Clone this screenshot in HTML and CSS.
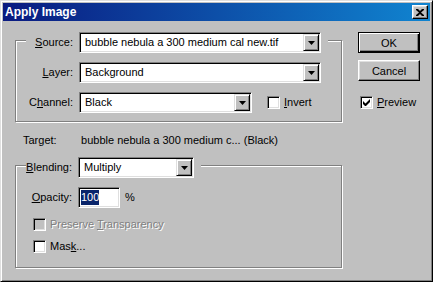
FILE: index.html
```html
<!DOCTYPE html>
<html lang="en">
<head>
  <meta charset="UTF-8" />
  <title>Apply Image</title>
  <link rel="stylesheet" href="styles.css">
</head>
<body>
  <div class="window">
    <div class="titlebar">
      <span class="title">Apply Image</span>
      <button class="close" type="button">
        <svg width="8" height="7" viewBox="0 0 8 7"><path d="M0 0h2l2 2 2-2h2v1L5 3.5 8 6v1H6L4 5 2 7H0V6l3-2.5L0 1z" fill="#000"/></svg>
      </button>
    </div>

    <div class="dialog">
      <div class="main">
        <fieldset class="group">
          <legend class="legend">
            <span class="lbl lbl-legend"><u>S</u>ource:</span>
            <div class="combo combo-wide">
              <span class="value">bubble nebula a 300 medium cal new.tif</span>
              <span class="drop"><svg width="7" height="4" viewBox="0 0 7 4"><path d="M0 0h7L3.5 4z" fill="#000"/></svg></span>
            </div>
          </legend>

          <div class="row">
            <span class="lbl"><u>L</u>ayer:</span>
            <div class="combo combo-wide">
              <span class="value">Background</span>
              <span class="drop"><svg width="7" height="4" viewBox="0 0 7 4"><path d="M0 0h7L3.5 4z" fill="#000"/></svg></span>
            </div>
          </div>

          <div class="row">
            <span class="lbl">C<u>h</u>annel:</span>
            <div class="combo combo-channel">
              <span class="value">Black</span>
              <span class="drop"><svg width="7" height="4" viewBox="0 0 7 4"><path d="M0 0h7L3.5 4z" fill="#000"/></svg></span>
            </div>
            <span class="check check-invert"><span class="box"></span><span class="text"><u>I</u>nvert</span></span>
          </div>
        </fieldset>

        <div class="target">
          <span class="target-lbl">Target:</span>
          <span>bubble nebula a 300 medium c... (Black)</span>
        </div>

        <fieldset class="group group-blend">
          <legend class="legend legend-blend">
            <span class="lbl lbl-blend"><u>B</u>lending:</span>
            <div class="combo combo-blend">
              <span class="value">Multiply</span>
              <span class="drop"><svg width="7" height="4" viewBox="0 0 7 4"><path d="M0 0h7L3.5 4z" fill="#000"/></svg></span>
            </div>
          </legend>

          <div class="row">
            <span class="lbl lbl-opacity"><u>O</u>pacity:</span>
            <div class="field"><span class="selected">100</span></div>
            <span class="unit">%</span>
          </div>

          <div class="check check-row disabled">
            <span class="box"></span>
            <span class="text">Preserve <u>T</u>ransparency</span>
          </div>
          <div class="check check-row check-mask">
            <span class="box"></span>
            <span class="text">Mas<u>k</u>...</span>
          </div>
        </fieldset>
      </div>

      <div class="side">
        <button class="btn btn-default" type="button"><span>OK</span></button>
        <button class="btn btn-cancel" type="button">Cancel</button>
        <span class="check check-preview">
          <span class="box">
            <svg width="7" height="7" viewBox="0 0 7 7"><path d="M0 2v3l2 2h1l4-4V0L2.5 4.5z" fill="#000"/></svg>
          </span>
          <span class="text"><u>P</u>review</span>
        </span>
      </div>
    </div>
  </div>
</body>
</html>
```

FILE: styles.css
```css
html, body {
  margin: 0;
  background-color: #c0c0c0;
  overflow: hidden;
}

body {
  font-family: "Liberation Sans", Arial, sans-serif;
  font-size: 11px;
  line-height: 13px;
  color: #000;
}

u {
  text-decoration: underline;
  text-underline-offset: 1px;
}

.window {
  box-sizing: border-box;
  width: 433px;
  height: 282px;
  padding: 2px;
  border: 1px solid;
  border-color: #dfdfdf #000 #000 #dfdfdf;
  box-shadow: inset 1px 1px #fff, inset -1px -1px #808080;
}

.titlebar {
  height: 18px;
  display: flex;
  align-items: center;
  justify-content: space-between;
  padding: 0 2px 0 2px;
  background: linear-gradient(90deg, #0a1a80, #1084d0);
}

.title {
  color: #fff;
  font-weight: bold;
  font-size: 12px;
}

.close {
  box-sizing: border-box;
  width: 16px;
  height: 14px;
  padding: 0;
  display: flex;
  align-items: center;
  justify-content: center;
  background-color: #c0c0c0;
  border: 1px solid;
  border-color: #fff #000 #000 #fff;
  box-shadow: inset -1px -1px #808080, inset 1px 1px #dfdfdf;
}

.dialog {
  display: flex;
  align-items: flex-start;
  padding-left: 12px;
}

.main {
  width: 327px;
  margin-top: 7px;
}

/* etched group frames */
.group {
  box-sizing: border-box;
  width: 100%;
  min-width: 0;
  margin: 0;
  padding: 0 0 8px 0;
  border: 1px solid #808080;
  box-shadow: inset 1px 1px #fff, 1px 1px #fff;
}

.legend {
  display: flex;
  align-items: center;
  margin-left: 10px;
  padding: 4px 7px 0 0;
  background-color: #c0c0c0;
}

.row {
  display: flex;
  align-items: center;
  margin-top: 9px;
}

.lbl {
  width: 57px;
  margin-right: 6px;
  text-align: right;
  flex: none;
}

.lbl-legend {
  width: 47px;
}

.lbl-blend {
  width: 46px;
}

.lbl-opacity {
  width: 56px;
}

/* combo boxes */
.combo {
  box-sizing: border-box;
  height: 21px;
  padding: 1px;
  display: flex;
  align-items: stretch;
  background-color: #fff;
  border: 1px solid;
  border-color: #808080 #fff #fff #808080;
  box-shadow: inset 1px 1px #000, inset -1px -1px #dfdfdf;
  flex: none;
}

.combo-wide {
  width: 242px;
}

.combo-channel {
  width: 173px;
}

.combo-blend {
  width: 116px;
}

.combo .value {
  flex: 1;
  padding-left: 4px;
  line-height: 17px;
  white-space: nowrap;
  overflow: hidden;
}

.drop {
  box-sizing: border-box;
  width: 16px;
  display: flex;
  align-items: center;
  justify-content: center;
  background-color: #c0c0c0;
  border: 1px solid;
  border-color: #dfdfdf #000 #000 #dfdfdf;
  box-shadow: inset 1px 1px #fff, inset -1px -1px #808080;
}

.field {
  box-sizing: border-box;
  width: 42px;
  height: 21px;
  padding: 2px 2px;
  background-color: #fff;
  border: 1px solid;
  border-color: #808080 #fff #fff #808080;
  box-shadow: inset 1px 1px #000, inset -1px -1px #dfdfdf;
}

.selected {
  display: inline-block;
  line-height: 15px;
  background-color: #0a246a;
  color: #fff;
}

.unit {
  margin-left: 5px;
}

/* checkboxes */
.check {
  display: flex;
  align-items: center;
}

.check .box {
  box-sizing: border-box;
  width: 13px;
  height: 13px;
  display: flex;
  align-items: center;
  justify-content: center;
  background-color: #fff;
  border: 1px solid;
  border-color: #808080 #fff #fff #808080;
  box-shadow: inset 1px 1px #000, inset -1px -1px #dfdfdf;
  flex: none;
}

.check .text {
  margin-left: 4px;
}

.check-invert {
  margin-left: 15px;
}

.check-row {
  height: 13px;
  margin-left: 17px;
  margin-top: 10px;
}

.check-mask {
  margin-top: 9px;
}

.group-blend {
  padding-bottom: 14px;
}

.disabled .box {
  background-color: #c0c0c0;
}

.disabled .text {
  color: #808080;
  text-shadow: 1px 1px #fff;
}

.target {
  margin-top: 11px;
  padding-left: 8px;
  line-height: 14px;
  height: 14px;
}

.target-lbl {
  display: inline-block;
  width: 55px;
}

.group-blend {
  margin-top: 6px;
}

/* right column */
.side {
  width: 62px;
  margin-left: 16px;
  margin-top: 11px;
  display: flex;
  flex-direction: column;
}

.btn {
  box-sizing: border-box;
  width: 62px;
  height: 21px;
  padding: 0;
  font-family: inherit;
  font-size: 11px;
  color: #000;
  background-color: #c0c0c0;
}

.btn-default {
  border: 1px solid #000;
  box-shadow: inset 1px 1px #fff, inset -1px -1px #000, inset -2px -2px #808080;
}

.btn-cancel {
  margin-top: 7px;
  border: 1px solid;
  border-color: #fff #000 #000 #fff;
  box-shadow: inset -1px -1px #808080, inset 1px 1px #dfdfdf;
}

.check-preview {
  margin-top: 15px;
  margin-left: 2px;
}
```
